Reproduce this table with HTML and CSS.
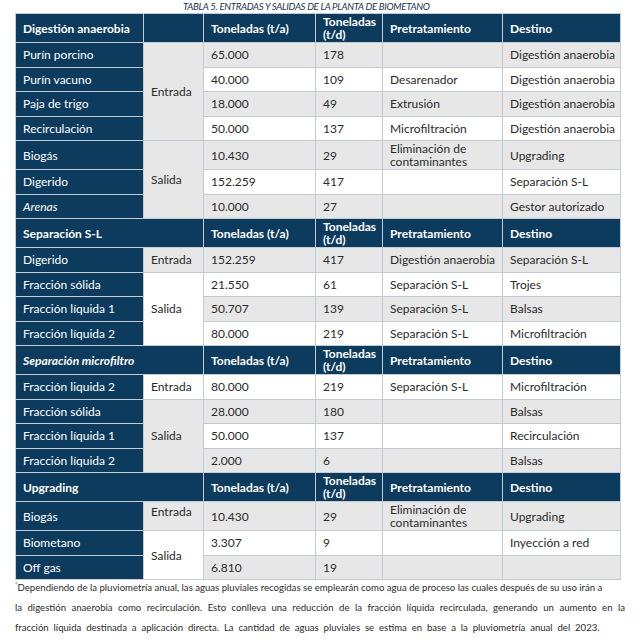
FILE: index.html
```html
<!DOCTYPE html>
<html lang="es">
<head>
    <meta charset="UTF-8">
    <meta name="viewport" content="width=device-width, initial-scale=1.0">
    <title>Tabla 5. Entradas y salidas de la planta de biometano</title>
    <link rel="stylesheet" href="styles.css">
</head>
<body>
    <div class="page">
        <p class="table-title">TABLA 5. ENTRADAS Y SALIDAS DE LA PLANTA DE BIOMETANO</p>

        <table class="flows">
            <colgroup>
                <col class="c-name">
                <col class="c-dir">
                <col class="c-ta">
                <col class="c-td">
                <col class="c-pre">
                <col class="c-dest">
            </colgroup>

            <!-- Digestión anaerobia -->
            <tr class="head">
                <th>Digestión anaerobia</th>
                <th></th>
                <th>Toneladas (t/a)</th>
                <th>Toneladas (t/d)</th>
                <th>Pretratamiento</th>
                <th>Destino</th>
            </tr>
            <tr class="grey">
                <td class="name">Purín porcino</td>
                <td class="dir grey" rowspan="4">Entrada</td>
                <td>65.000</td><td>178</td><td></td><td>Digestión anaerobia</td>
            </tr>
            <tr>
                <td class="name">Purín vacuno</td>
                <td>40.000</td><td>109</td><td>Desarenador</td><td>Digestión anaerobia</td>
            </tr>
            <tr class="grey">
                <td class="name">Paja de trigo</td>
                <td>18.000</td><td>49</td><td>Extrusión</td><td>Digestión anaerobia</td>
            </tr>
            <tr>
                <td class="name">Recirculación</td>
                <td>50.000</td><td>137</td><td>Microfiltración</td><td>Digestión anaerobia</td>
            </tr>
            <tr class="grey tall">
                <td class="name">Biogás</td>
                <td class="dir grey" rowspan="3">Salida</td>
                <td>10.430</td><td>29</td><td>Eliminación de contaminantes</td><td>Upgrading</td>
            </tr>
            <tr>
                <td class="name">Digerido</td>
                <td>152.259</td><td>417</td><td></td><td>Separación S-L</td>
            </tr>
            <tr class="grey">
                <td class="name"><em>Arenas</em></td>
                <td>10.000</td><td>27</td><td></td><td>Gestor autorizado</td>
            </tr>

            <!-- Separación S-L -->
            <tr class="head">
                <th colspan="2">Separación S-L</th>
                <th>Toneladas (t/a)</th>
                <th>Toneladas (t/d)</th>
                <th>Pretratamiento</th>
                <th>Destino</th>
            </tr>
            <tr class="grey">
                <td class="name">Digerido</td>
                <td class="dir grey">Entrada</td>
                <td>152.259</td><td>417</td><td>Digestión anaerobia</td><td>Separación S-L</td>
            </tr>
            <tr>
                <td class="name">Fracción sólida</td>
                <td class="dir" rowspan="3">Salida</td>
                <td>21.550</td><td>61</td><td>Separación S-L</td><td>Trojes</td>
            </tr>
            <tr class="grey">
                <td class="name">Fracción líquida 1</td>
                <td>50.707</td><td>139</td><td>Separación S-L</td><td>Balsas</td>
            </tr>
            <tr>
                <td class="name">Fracción líquida 2</td>
                <td>80.000</td><td>219</td><td>Separación S-L</td><td>Microfiltración</td>
            </tr>

            <!-- Separación microfiltro -->
            <tr class="head">
                <th colspan="2"><em>Separación microfiltro</em></th>
                <th>Toneladas (t/a)</th>
                <th>Toneladas (t/d)</th>
                <th>Pretratamiento</th>
                <th>Destino</th>
            </tr>
            <tr>
                <td class="name">Fracción liquida 2</td>
                <td class="dir">Entrada</td>
                <td>80.000</td><td>219</td><td>Separación S-L</td><td>Microfiltración</td>
            </tr>
            <tr class="grey">
                <td class="name">Fracción sólida</td>
                <td class="dir grey" rowspan="3">Salida</td>
                <td>28.000</td><td>180</td><td></td><td>Balsas</td>
            </tr>
            <tr>
                <td class="name">Fracción líquida 1</td>
                <td>50.000</td><td>137</td><td></td><td>Recirculación</td>
            </tr>
            <tr class="grey">
                <td class="name">Fracción líquida 2</td>
                <td>2.000</td><td>6</td><td></td><td>Balsas</td>
            </tr>

            <!-- Upgrading -->
            <tr class="head">
                <th colspan="2">Upgrading</th>
                <th>Toneladas (t/a)</th>
                <th>Toneladas (t/d)</th>
                <th>Pretratamiento</th>
                <th>Destino</th>
            </tr>
            <tr class="grey tall">
                <td class="name">Biogás</td>
                <td class="dir grey top">Entrada</td>
                <td>10.430</td><td>29</td><td>Eliminación de contaminantes</td><td>Upgrading</td>
            </tr>
            <tr>
                <td class="name">Biometano</td>
                <td class="dir" rowspan="2">Salida</td>
                <td>3.307</td><td>9</td><td></td><td>Inyección a red</td>
            </tr>
            <tr class="grey">
                <td class="name">Off gas</td>
                <td>6.810</td><td>19</td><td></td><td></td>
            </tr>
        </table>

        <div class="footnote">
            <span class="line"><sup>*</sup>Dependiendo de la pluviometría anual, las aguas pluviales recogidas se emplearán como agua de proceso las cuales después de su uso irán a</span>
            <span class="line justify">la digestión anaerobia como recirculación. Esto conlleva una reducción de la fracción líquida recirculada, generando un aumento en la</span>
            <span class="line spread">fracción líquida destinada a aplicación directa. La cantidad de aguas pluviales se estima en base a la pluviometría anual del 2023.</span>
        </div>
    </div>
</body>
</html>
```

FILE: styles.css
```css
* {
    margin: 0;
    padding: 0;
    box-sizing: border-box;
}

body {
    background-color: #fff;
    color: #2b2b2b;
    font-family: Lato, 'Liberation Sans', sans-serif;
}

.page {
    width: 640px;
    padding: 2px 15px 0 15px;
}

.table-title {
    padding-left: 168px;
    height: 11px;
    font-size: 9.6px;
    line-height: 10px;
    font-style: italic;
    font-weight: 400;
    letter-spacing: -0.3px;
    color: #1b3450;
}

.flows {
    width: 605px;
    border-collapse: collapse;
    table-layout: fixed;
    font-size: 12px;
    line-height: 13px;
}

.c-name { width: 128px; }
.c-dir  { width: 60px; }
.c-ta   { width: 112px; }
.c-td   { width: 67px; }
.c-pre  { width: 120px; }
.c-dest { width: 118px; }

.flows th,
.flows td {
    border: 1px solid #c3ccd4;
    padding: 1px 6px 1px 7px;
    text-align: left;
    vertical-align: middle;
    white-space: nowrap;
}

.flows th {
    white-space: normal;
    color: #fff;
    font-weight: 700;
}

.flows tr {
    height: 24.5px;
    background-color: #fff;
}

.flows tr.grey,
.flows td.grey {
    background-color: #e7e7e7;
}

.flows tr.tall {
    height: 28px;
}

.flows tr.tall td {
    white-space: normal;
}

.flows tr.head {
    height: 29px;
    background-color: #0c3b5d;
}

.flows td.name {
    background-color: #0c3b5d;
    color: #fff;
}

.flows td.dir {
    background-color: #fff;
}

.flows td.dir.grey {
    background-color: #e7e7e7;
}

.flows td.top {
    vertical-align: top;
    padding-top: 3px;
}

.footnote {
    margin-top: -2px;
    font-size: 9.6px;
    line-height: 20px;
    color: #2b2b2b;
}

.footnote .line {
    display: block;
    white-space: nowrap;
}

.footnote .justify {
    text-align: justify;
    text-align-last: justify;
    white-space: normal;
}

.footnote .spread {
    word-spacing: 2.4px;
}

.footnote sup {
    font-size: 6px;
    vertical-align: top;
    line-height: 12px;
}
```
